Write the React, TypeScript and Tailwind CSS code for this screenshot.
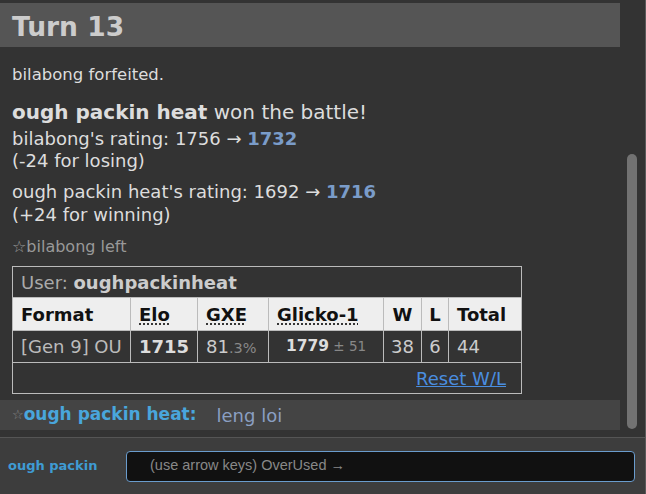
import React from 'react';

const dotted = 'underline decoration-dotted decoration-[#222] underline-offset-[3px]';
const cell = 'border border-[#bbb]';

export default function App() {
  return (
    <div className="w-[646px] h-[494px] bg-[#333] border-r border-[#5a5a5a] flex flex-col font-['DejaVu_Sans',Verdana,sans-serif] text-[#ddd] overflow-hidden">
      {/* battle log */}
      <div className="flex-1 flex min-h-0">
        <div className="w-[620px] pt-[3px]">
          <h2 className="h-[44px] bg-[#555] text-[#ccc] text-[26.5px] font-bold flex items-center pt-[3px] pl-[12px]">
            Turn 13
          </h2>
          <div className="pl-[12px] pt-[18px]">
            <div className="text-[16.5px] leading-[20px]">bilabong forfeited.</div>
            <div className="text-[20px] leading-[24px] mt-[15px]">
              <strong>ough packin heat</strong> won the battle!
            </div>
            <div className="text-[18px] leading-[22px] mt-[4px]">
              bilabong's rating: 1756 → <strong className="text-[#7a9cc9]">1732</strong>
              <br />
              (-24 for losing)
            </div>
            <div className="text-[18px] leading-[22.5px] mt-[9px]">
              ough packin heat's rating: 1692 → <strong className="text-[#7a9cc9]">1716</strong>
              <br />
              (+24 for winning)
            </div>
            <div className="text-[16px] leading-[20px] mt-[11px] text-[#999]">☆bilabong left</div>
            <table className="mt-[9px] w-[510px] table-fixed border-collapse text-[18px] border border-[#bbb]">
              <colgroup>
                <col className="w-[118px]" />
                <col className="w-[67px]" />
                <col className="w-[71px]" />
                <col className="w-[115px]" />
                <col className="w-[38px]" />
                <col className="w-[27px]" />
                <col />
              </colgroup>
              <tbody>
                <tr className="h-[31px]">
                  <td colSpan={7} className="px-[8px] text-[#aaa]">
                    User: <strong className="text-[#ccc]">oughpackinheat</strong>
                  </td>
                </tr>
                <tr className="h-[33px] bg-[#eee] text-[#111] font-bold">
                  <th className={`${cell} px-[8px] text-left`}>Format</th>
                  <th className={`${cell} px-[8px] text-left`}>
                    <span className={dotted}>Elo</span>
                  </th>
                  <th className={`${cell} px-[8px] text-left`}>
                    <span className={dotted}>GXE</span>
                  </th>
                  <th className={`${cell} px-[8px] text-left`}>
                    <span className={dotted}>Glicko-1</span>
                  </th>
                  <th className={`${cell} text-center`}>W</th>
                  <th className={`${cell} text-center`}>L</th>
                  <th className={`${cell} px-[8px] text-left`}>Total</th>
                </tr>
                <tr className="h-[32px]">
                  <td className={`${cell} px-[8px] text-[#bbb] whitespace-nowrap`}>[Gen 9] OU</td>
                  <td className={`${cell} px-[8px] font-bold text-[#ddd]`}>1715</td>
                  <td className={`${cell} px-[8px] text-[#ccc]`}>
                    81<span className="text-[#888] text-[14.5px]">.3%</span>
                  </td>
                  <td className={`${cell} text-center text-[#ddd] text-[15.5px] font-semibold`}>
                    1779<span className="text-[#888] text-[13.5px] font-normal"> ± 51</span>
                  </td>
                  <td className={`${cell} text-center text-[#ccc]`}>38</td>
                  <td className={`${cell} text-center text-[#ccc]`}>6</td>
                  <td className={`${cell} px-[8px] text-[#ccc]`}>44</td>
                </tr>
                <tr className="h-[31px]">
                  <td colSpan={7} className={`${cell} pr-[15px] text-right`}>
                    <a href="#" className="text-[#4a8ee0] underline">Reset W/L</a>
                  </td>
                </tr>
              </tbody>
            </table>
          </div>
          <div className="mt-[6px] h-[30px] bg-[#444] flex items-center pl-[12px] text-[18px]">
            <span className="text-[#888] text-[13px]">☆</span>
            <strong className="text-[#49a6dc] text-[17px]">ough packin heat:</strong>
            <span className="ml-[20px] text-[#8a9fc2]">leng loi</span>
          </div>
        </div>
        <div className="w-[25px] pl-[7px] pt-[154px]">
          <div className="w-[10px] h-[275px] rounded-full bg-[#727272]" />
        </div>
      </div>
      {/* chat input */}
      <div className="h-[57px] shrink-0 border-t border-[#555] bg-[#3d3d3d] flex items-center pl-[8px] pr-[10px] gap-[10px]">
        <strong className="text-[#3f9bd3] text-[13px] w-[108px]">ough packin</strong>
        <div className="flex-1 h-[31px] bg-[#111] border border-[#6a9ccd] rounded-[4px] flex items-center pl-[23px] font-['Liberation_Sans',Arial,sans-serif] text-[14.5px] text-[#888]">
          (use arrow keys) OverUsed →
        </div>
      </div>
    </div>
  );
}
